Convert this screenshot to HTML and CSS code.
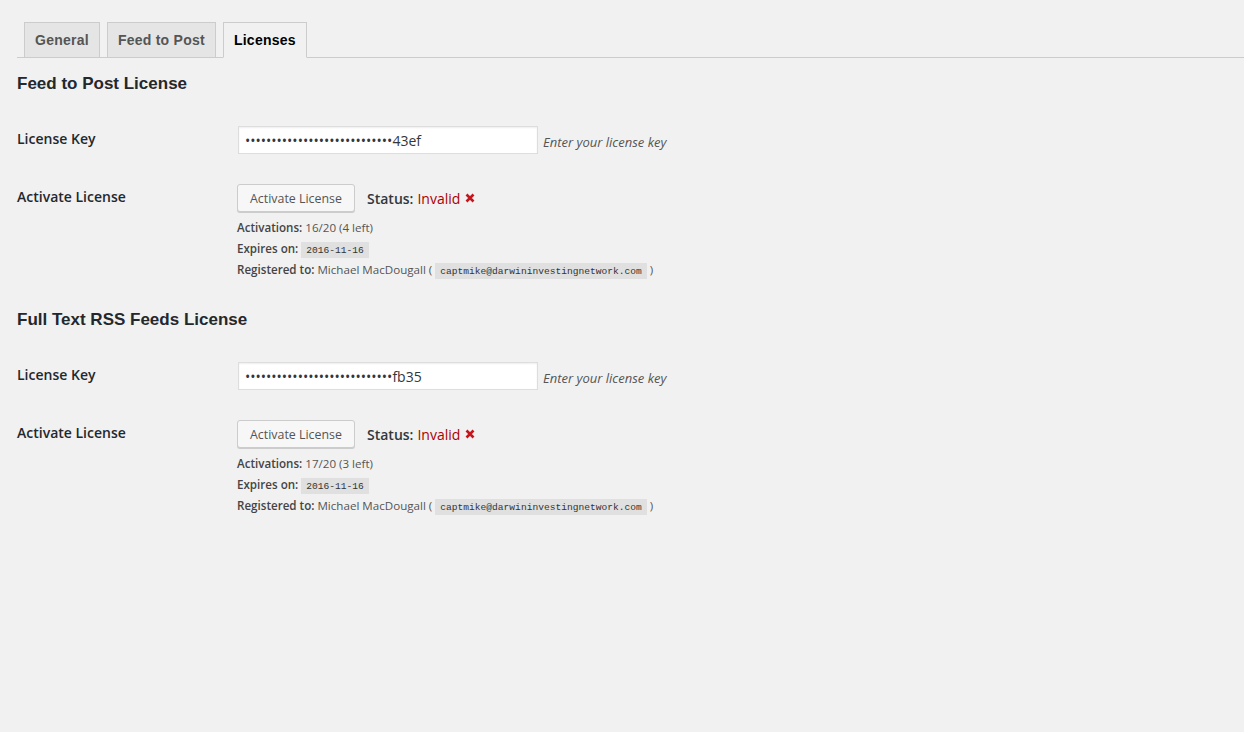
FILE: index.html
```html
<!DOCTYPE html>
<html lang="en">
<head>
    <meta charset="UTF-8">
    <meta name="viewport" content="width=device-width, initial-scale=1.0">
    <title>Licenses</title>
    <link rel="stylesheet" href="styles.css">
</head>
<body>
    <div class="wrap">
        <nav class="tabs">
            <a class="tab" href="#">General</a>
            <a class="tab" href="#">Feed to Post</a>
            <a class="tab active" href="#">Licenses</a>
        </nav>

        <section class="license">
            <h3>Feed to Post License</h3>
            <div class="row key-row">
                <div class="label">License Key</div>
                <div class="field">
                    <input class="key" type="text" value="••••••••••••••••••••••••••••43ef">
                    <span class="desc">Enter your license key</span>
                </div>
            </div>
            <div class="row">
                <div class="label act-label">Activate License</div>
                <div class="field-col">
                    <div class="field">
                        <button class="btn">Activate License</button>
                        <span class="status">Status: <span class="invalid">Invalid</span>
                            <svg class="x" viewBox="0 0 10 10" width="10" height="10"><path d="M1.5 1.5 L8.5 8.5 M8.5 1.5 L1.5 8.5" stroke="#c4161c" stroke-width="2.6" stroke-linecap="butt"/></svg>
                        </span>
                    </div>
                    <div class="info">
                        <p><b>Activations:</b> 16/20 (4 left)</p>
                        <p><b>Expires on:</b> <code>2016-11-16</code></p>
                        <p><b>Registered to:</b> Michael MacDougall ( <code>captmike@darwininvestingnetwork.com</code> )</p>
                    </div>
                </div>
            </div>
        </section>

        <section class="license">
            <h3>Full Text RSS Feeds License</h3>
            <div class="row key-row">
                <div class="label">License Key</div>
                <div class="field">
                    <input class="key" type="text" value="••••••••••••••••••••••••••••fb35">
                    <span class="desc">Enter your license key</span>
                </div>
            </div>
            <div class="row">
                <div class="label act-label">Activate License</div>
                <div class="field-col">
                    <div class="field">
                        <button class="btn">Activate License</button>
                        <span class="status">Status: <span class="invalid">Invalid</span>
                            <svg class="x" viewBox="0 0 10 10" width="10" height="10"><path d="M1.5 1.5 L8.5 8.5 M8.5 1.5 L1.5 8.5" stroke="#c4161c" stroke-width="2.6" stroke-linecap="butt"/></svg>
                        </span>
                    </div>
                    <div class="info">
                        <p><b>Activations:</b> 17/20 (3 left)</p>
                        <p><b>Expires on:</b> <code>2016-11-16</code></p>
                        <p><b>Registered to:</b> Michael MacDougall ( <code>captmike@darwininvestingnetwork.com</code> )</p>
                    </div>
                </div>
            </div>
        </section>
    </div>
</body>
</html>
```

FILE: styles.css
```css
* {
    box-sizing: border-box;
}

body {
    margin: 0;
    background-color: #f1f1f1;
    color: #444;
    font-family: "Open Sans", sans-serif;
    font-size: 13px;
}

.wrap {
    padding-left: 17px;
    padding-top: 22px;
}

.tabs {
    display: flex;
    border-bottom: 1px solid #ccc;
}

.tab {
    margin-left: 7px;
    margin-bottom: -1px;
    padding: 5px 10px;
    line-height: 24px;
    border: 1px solid #ccc;
    background-color: #e5e5e5;
    color: #555;
    font-family: "Liberation Sans", Arial, sans-serif;
    font-size: 14px;
    font-weight: bold;
    letter-spacing: 0.25px;
    text-decoration: none;
}

.tab.active {
    background-color: #f1f1f1;
    border-bottom-color: #f1f1f1;
    color: #000;
}

h3 {
    margin: 16px 0 0;
    font-family: "Liberation Sans", Arial, sans-serif;
    font-size: 17px;
    line-height: 20px;
    font-weight: bold;
    color: #23282d;
}

.license + .license h3 {
    margin-top: 30px;
}

.row {
    display: flex;
    margin-top: 30px;
}

.key-row {
    margin-top: 32px;
}

.label {
    width: 220px;
    flex-shrink: 0;
    font-size: 14px;
    font-weight: 600;
    color: #23282d;
    line-height: 26px;
}

.field {
    display: flex;
    align-items: center;
    height: 28px;
}

.key {
    width: 300px;
    height: 28px;
    margin: 0 0 0 1px;
    padding: 0 6px;
    border: 1px solid #ddd;
    background-color: #fff;
    box-shadow: inset 0 1px 2px rgba(0, 0, 0, 0.07);
    font-family: "Open Sans", sans-serif;
    font-size: 14px;
    color: #32373c;
}

.desc {
    margin-left: 5px;
    padding-top: 3px;
    font-style: italic;
    font-size: 13px;
    color: #555;
}

.btn {
    width: 118px;
    height: 28px;
    padding: 0;
    border: 1px solid #ccc;
    border-radius: 3px;
    background-color: #f7f7f7;
    box-shadow: 0 1px 0 #ccc;
    font-family: "Open Sans", sans-serif;
    font-size: 12.4px;
    white-space: nowrap;
    color: #555;
}

.status {
    margin-left: 12px;
    font-size: 14px;
    font-weight: 600;
    color: #32373c;
    display: flex;
    align-items: center;
}

.invalid {
    margin-left: 4px;
    font-weight: normal;
    color: #a00;
}

.x {
    margin-left: 5px;
}

.info {
    margin-top: 5px;
}

.info p {
    margin: 0;
    font-size: 11.6px;
    line-height: 21px;
    height: 21px;
    color: #555;
}

.info b {
    font-weight: 600;
    color: #444;
}

code {
    padding: 3px 5px 2px;
    background-color: rgba(0, 0, 0, 0.07);
    font-family: "Liberation Mono", monospace;
    font-size: 9.6px;
    line-height: 1;
    color: #333;
}
```
